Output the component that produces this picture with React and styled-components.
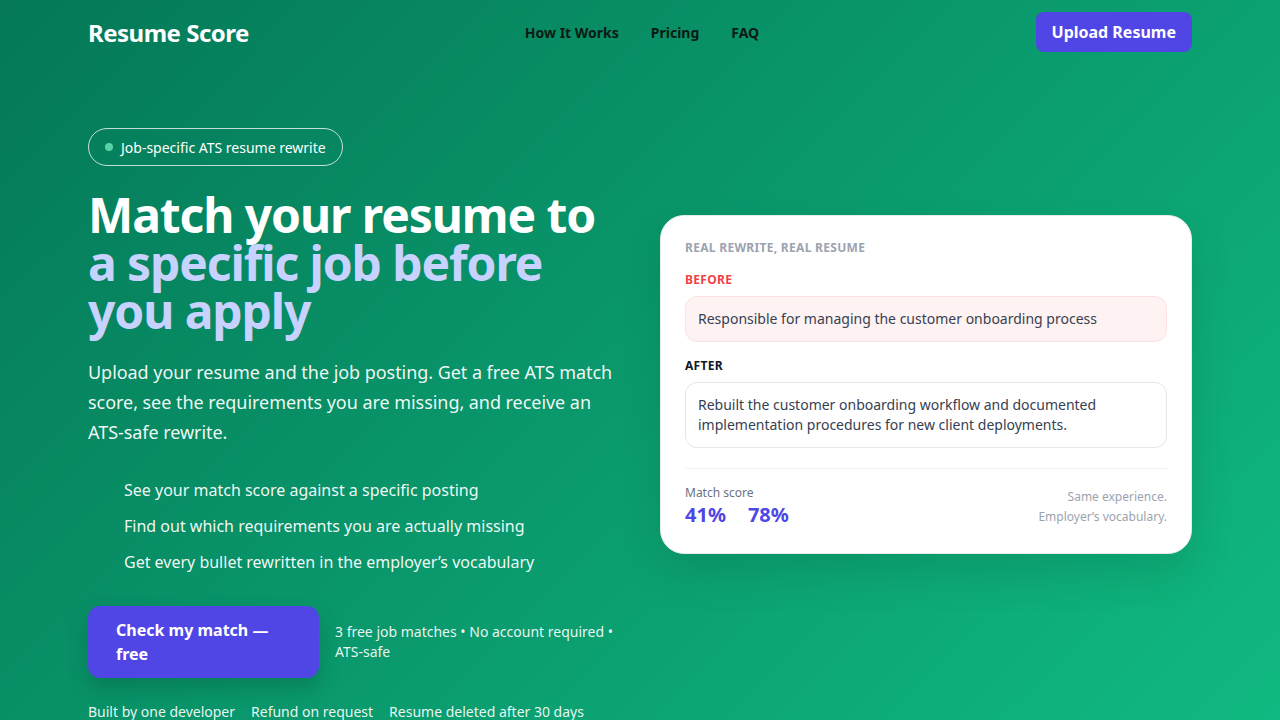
import React from 'react';
import styled, { createGlobalStyle } from 'styled-components';

const GlobalStyle = createGlobalStyle`
  * {
    box-sizing: border-box;
  }
  html,
  body {
    margin: 0;
    padding: 0;
  }
  body {
    font-family: 'Noto Sans', 'Open Sans', 'Liberation Sans', sans-serif;
    color: #fff;
    background: #0a9468;
  }
`;

const Page = styled.div`
  min-height: 100vh;
  background: linear-gradient(135deg, #047857 0%, #10b981 100%);
  overflow: hidden;
`;

const Container = styled.div`
  max-width: 1104px;
  margin: 0 auto;
`;

const Nav = styled.nav`
  height: 64px;
  display: grid;
  grid-template-columns: 1fr auto 1fr;
  align-items: center;
`;

const Logo = styled.a`
  font-size: 24px;
  font-weight: 700;
  color: #fff;
  text-decoration: none;
  letter-spacing: -0.5px;
`;

const NavLinks = styled.div`
  display: flex;
  gap: 32px;
  margin-left: 4px;
`;

const NavLink = styled.a`
  font-size: 14px;
  font-weight: 700;
  color: #0b1a14;
  text-decoration: none;
`;

const UploadButton = styled.button`
  justify-self: end;
  height: 40px;
  padding: 0 16px;
  border: none;
  border-radius: 8px;
  background: #4f46e5;
  color: #fff;
  font-family: inherit;
  font-size: 16px;
  font-weight: 700;
  cursor: pointer;
`;

const Hero = styled.section`
  display: grid;
  grid-template-columns: 532px 532px;
  gap: 40px;
  align-items: start;
  padding-top: 64px;
`;

const Left = styled.div`
  display: flex;
  flex-direction: column;
`;

const Badge = styled.div`
  align-self: flex-start;
  display: inline-flex;
  align-items: center;
  gap: 8px;
  height: 38px;
  padding: 0 16px;
  border: 1px solid rgba(255, 255, 255, 0.75);
  border-radius: 999px;
  font-size: 14px;
  color: #fff;
`;

const Dot = styled.span`
  width: 8px;
  height: 8px;
  border-radius: 50%;
  background: #6ee7b7;
  opacity: 0.8;
`;

const Title = styled.h1`
  margin: 25px 0 0;
  font-size: 48px;
  line-height: 48px;
  font-weight: 700;
  letter-spacing: -1.1px;
  color: #fff;
`;

const Accent = styled.span`
  color: #c7d2fe;
`;

const Lead = styled.p`
  margin: 22px 0 0;
  font-size: 18px;
  line-height: 30px;
  letter-spacing: -0.05px;
  color: rgba(255, 255, 255, 0.95);
`;

const Points = styled.ul`
  list-style: none;
  margin: 31px 0 0;
  padding: 0 0 0 36px;
  display: flex;
  flex-direction: column;
  gap: 12px;
`;

const Point = styled.li`
  font-size: 16px;
  line-height: 24px;
  color: rgba(255, 255, 255, 0.95);
`;

const CtaRow = styled.div`
  display: flex;
  align-items: center;
  gap: 16px;
  margin-top: 32px;
`;

const CtaButton = styled.button`
  flex-shrink: 0;
  width: 231px;
  padding: 12px 28px;
  border: none;
  border-radius: 12px;
  background: #4f46e5;
  color: #fff;
  font-family: inherit;
  font-size: 16px;
  line-height: 24px;
  font-weight: 700;
  text-align: left;
  box-shadow: 0 10px 20px rgba(4, 60, 40, 0.25);
  cursor: pointer;
`;

const CtaNote = styled.p`
  margin: 0;
  max-width: 290px;
  font-size: 14px;
  line-height: 20px;
  color: rgba(255, 255, 255, 0.92);
`;

const Trust = styled.div`
  display: flex;
  gap: 16px;
  margin-top: 24px;
  font-size: 14px;
  line-height: 20px;
  color: rgba(255, 255, 255, 0.92);
`;

const Card = styled.div`
  margin-top: 87px;
  background: #fff;
  border: 1px solid #e3ece8;
  border-radius: 24px;
  padding: 24px 24px 26px;
  box-shadow: 0 20px 40px rgba(4, 60, 40, 0.15);
  color: #1f2937;
`;

const Label = styled.div`
  font-size: 12px;
  line-height: 16px;
  font-weight: 700;
  text-transform: uppercase;
  letter-spacing: 0.3px;
  color: ${(p) => p.$color || '#111827'};
  margin-top: ${(p) => p.$top || 0}px;
`;

const Quote = styled.div`
  margin-top: 8px;
  padding: 12px;
  border-radius: 12px;
  border: 1px solid ${(p) => (p.$before ? '#fde2e2' : '#e5e7eb')};
  background: ${(p) => (p.$before ? '#fef2f2' : '#fff')};
  font-size: 14px;
  line-height: 20px;
  color: #374151;
`;

const Divider = styled.hr`
  border: none;
  border-top: 1px solid #eef1f4;
  margin: 20px 0 16px;
`;

const ScoreRow = styled.div`
  display: flex;
  justify-content: space-between;
  align-items: flex-end;
`;

const ScoreLabel = styled.div`
  font-size: 12px;
  line-height: 16px;
  color: #6b7280;
`;

const Scores = styled.div`
  display: flex;
  gap: 22px;
  margin-top: 2px;
  font-size: 20px;
  line-height: 24px;
  font-weight: 700;
  color: #4f46e5;
`;

const ScoreNote = styled.div`
  text-align: right;
  font-size: 12px;
  line-height: 20px;
  color: #9ca3af;
`;

export default function App() {
  return (
    <>
      <GlobalStyle />
      <Page>
        <Container>
          <Nav>
            <Logo href="#">Resume Score</Logo>
            <NavLinks>
              <NavLink href="#">How It Works</NavLink>
              <NavLink href="#">Pricing</NavLink>
              <NavLink href="#">FAQ</NavLink>
            </NavLinks>
            <UploadButton>Upload Resume</UploadButton>
          </Nav>

          <Hero>
            <Left>
              <Badge>
                <Dot />
                Job-specific ATS resume rewrite
              </Badge>
              <Title>
                Match your resume to <Accent>a specific job before you apply</Accent>
              </Title>
              <Lead>
                Upload your resume and the job posting. Get a free ATS match
                score, see the requirements you are missing, and receive an
                ATS-safe rewrite.
              </Lead>
              <Points>
                <Point>See your match score against a specific posting</Point>
                <Point>Find out which requirements you are actually missing</Point>
                <Point>Get every bullet rewritten in the employer’s vocabulary</Point>
              </Points>
              <CtaRow>
                <CtaButton>Check my match — free</CtaButton>
                <CtaNote>
                  3 free job matches • No account required • ATS-safe
                </CtaNote>
              </CtaRow>
              <Trust>
                <span>Built by one developer</span>
                <span>Refund on request</span>
                <span>Resume deleted after 30 days</span>
              </Trust>
            </Left>

            <Card>
              <Label $color="#9ca3af">Real rewrite, real resume</Label>
              <Label $color="#ef4444" $top={16}>Before</Label>
              <Quote $before>
                Responsible for managing the customer onboarding process
              </Quote>
              <Label $top={16}>After</Label>
              <Quote>
                Rebuilt the customer onboarding workflow and documented
                implementation procedures for new client deployments.
              </Quote>
              <Divider />
              <ScoreRow>
                <div>
                  <ScoreLabel>Match score</ScoreLabel>
                  <Scores>
                    <span>41%</span>
                    <span>78%</span>
                  </Scores>
                </div>
                <ScoreNote>
                  Same experience.
                  <br />
                  Employer’s vocabulary.
                </ScoreNote>
              </ScoreRow>
            </Card>
          </Hero>
        </Container>
      </Page>
    </>
  );
}
